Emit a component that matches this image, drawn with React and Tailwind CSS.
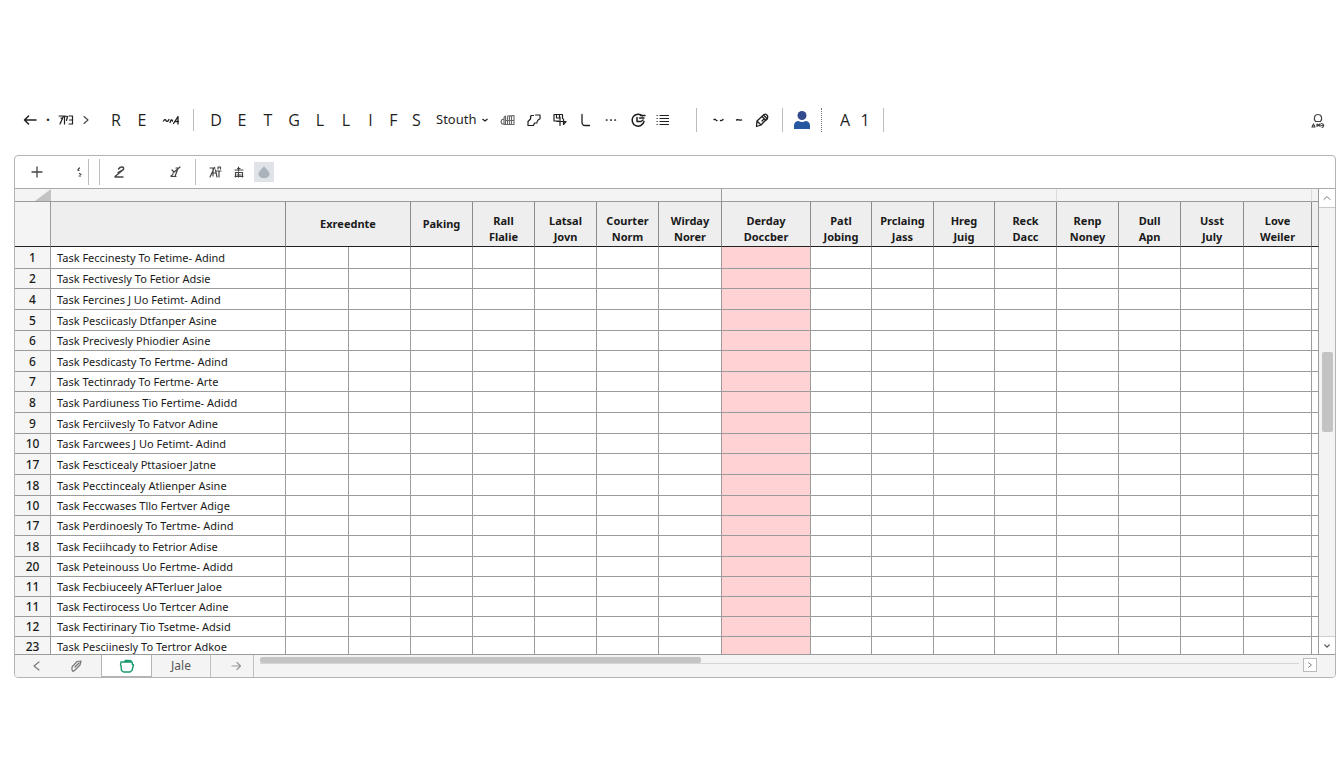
const columnWidths = [36, 235, 63, 62, 62, 62, 62, 62, 63, 89, 61, 62, 61, 62, 62, 62, 63, 68, 7];

const headings = [
  ['Exreednte'],
  ['Paking'],
  ['Rall', 'Flalie'],
  ['Latsal', 'Jovn'],
  ['Courter', 'Norm'],
  ['Wirday', 'Norer'],
  ['Derday', 'Doccber'],
  ['Patl', 'Jobing'],
  ['Prclaing', 'Jass'],
  ['Hreg', 'Juig'],
  ['Reck', 'Dacc'],
  ['Renp', 'Noney'],
  ['Dull', 'Apn'],
  ['Usst', 'July'],
  ['Love', 'Weiler'],
];

const tasks = [
  [1, 'Task Feccinesty To Fetime- Adind'],
  [2, 'Task Fectivesly To Fetior Adsie'],
  [4, 'Task Fercines J Uo Fetimt- Adind'],
  [5, 'Task Pesciicasly Dtfanper Asine'],
  [6, 'Task Precivesly Phiodier Asine'],
  [6, 'Task Pesdicasty To Fertme- Adind'],
  [7, 'Task Tectinrady To Fertme- Arte'],
  [8, 'Task Pardiuness Tio Fertime- Adidd'],
  [9, 'Task Ferciivesly To Fatvor Adine'],
  [10, 'Task Farcwees J Uo Fetimt- Adind'],
  [17, 'Task Fescticealy Pttasioer Jatne'],
  [18, 'Task Pecctincealy Atlienper Asine'],
  [10, 'Task Feccwases Tllo Fertver Adige'],
  [17, 'Task Perdinoesly To Tertme- Adind'],
  [18, 'Task Feciihcady to Fetrior Adise'],
  [20, 'Task Peteinouss Uo Fertme- Adidd'],
  [11, 'Task Fecbiuceely AFTerluer Jaloe'],
  [11, 'Task Fectirocess Uo Tertcer Adine'],
  [12, 'Task Fectirinary Tio Tsetme- Adsid'],
  [23, 'Task Pesciinesly To Tertror Adkoe'],
];

const rowHeights = ['h-[22px]', 'h-5', 'h-[21px]', 'h-[21px]', 'h-5', 'h-[21px]', 'h-5', 'h-[21px]', 'h-[21px]', 'h-5', 'h-[21px]', 'h-[21px]', 'h-5', 'h-5', 'h-[21px]', 'h-5', 'h-5', 'h-5', 'h-5', 'h-5'];

function Icon({ label, className, box = '0 0 16 16', size = 'size-4', children, width = 1.2 }) {
  return (
    <button type="button" aria-label={label} className={`flex shrink-0 items-center justify-center ${className}`}>
      <svg viewBox={box} className={size} fill="none" stroke="currentColor" strokeWidth={width} strokeLinecap="round" strokeLinejoin="round">
        {children}
      </svg>
    </button>
  );
}

function Letter({ children, className = 'w-[26px]' }) {
  return <button type="button" className={`shrink-0 text-center font-['Open_Sans','Noto_Sans',sans-serif] text-base ${className}`}>{children}</button>;
}

function Divider({ className = '' }) {
  return <span className={`w-px shrink-0 bg-[#bdbdbd] ${className}`} />;
}

function CommandBar() {
  return (
    <header className="flex h-6 items-center pl-5 pr-4 text-[#1f1f1f]">
      <Icon label="Back" className="w-5" width={1.5}><path d="M14 8H2.5M6.5 4 2.5 8l4 4" /></Icon>
      <span className="w-4 text-center text-sm font-bold">·</span>
      <Icon label="View" className="w-5" box="0 0 20 16" size="h-4 w-5">
        <path d="M3 4h4.500L4 12M5 6l1.500 1M8.500 4v8M8.500 4l3 .5-1 4M13 4h3.500v8H13M13.500 8h3" />
      </Icon>
      <Icon label="Next" className="w-5 text-[#444]" width={1.1}><path d="m6 4.500 4 3.500-4 3.500" /></Icon>
      <span className="w-[7px] shrink-0" />
      <Letter>R</Letter>
      <Letter>E</Letter>
      <Icon label="Signature" className="w-8" box="0 0 18 16" size="h-4 w-[18px]" width={1.3}>
        <path d="M1.500 9c1-1.500 2-2 2.500-.5S6 9.500 7 7.500M8 10.500c1-3 2-3.500 2.500-1.500M11.500 11.500 16 4.500V12M13 9.500h3.500" />
      </Icon>
      <Divider className="mx-1.5 h-5.5" />
      <span className="w-[3px] shrink-0" />
      <Letter>D</Letter>
      <Letter>E</Letter>
      <Letter>T</Letter>
      <Letter>G</Letter>
      <Letter>L</Letter>
      <Letter>L</Letter>
      <Letter className="w-[23px]">I</Letter>
      <Letter className="w-[23px]">F</Letter>
      <Letter className="w-[23px]">S</Letter>
      <button type="button" className="ml-2 flex w-[53px] shrink-0 items-center justify-between text-[13px]">
        Stouth
        <svg viewBox="0 0 8 8" className="size-2" fill="none" stroke="currentColor" strokeWidth="1.300"><path d="m1.500 3 2.500 2 2.500-2" /></svg>
      </button>
      <Icon label="Chart" className="ml-1.5 w-[26px] text-[#666]" width={1.1}>
        <path d="M4 7.500H2L1 9.500 2 12h2M4 12.500V5.500L5.500 4v8.500M7.500 12.500V5M9.500 12.500V4M11.500 12.500V4M14 12.500V3.500M7.500 4 14 3.500M4 12.500h10M5.500 8.500H14" />
      </Icon>
      <Icon label="Shape" className="w-[26px]">
        <path d="M5 3.500h2.500M9.500 3H14v4l-1.500.5L11 10M5 3.500 4.500 7 2 9.500v4h5.500L8.500 11H11M4.500 4.500V7" />
      </Icon>
      <Icon label="Insert" className="w-[26px]">
        <path d="M2 2.500h8.500v4M2 2.500v6.500h4.500M4.500 2.500V6h3V2.500M8 5v8.500M5 9.500h9M11.500 7v5.500l2.500-3" />
      </Icon>
      <Icon label="Corner" className="w-[26px]" width={1.300}><path d="M4 2.500v7.500c0 2.500 1 3.500 3 3.500h4.500" /></Icon>
      <Icon label="More" className="w-6" width={1.7}><path d="M3.500 8h.4M7.800 8h.4M12 8h.4" /></Icon>
      <Icon label="History" className="w-[29px]" width={1.500}>
        <path d="M12.500 4A6 6 0 1 0 14 9.500M10.500 3.500H15M14 6H9.500M7 5.500v4h4l2-1.500" />
      </Icon>
      <Icon label="List" className="w-[22px]" width={1.200}>
        <path d="M2 3.500h.2M2 6.500h.2M2 9.500h.2M2 12.500h.2M5 3.500h8.500M5 6.500h8.500M5 9.500h8.500M5 12.500h8.500" />
      </Icon>
      <Divider className="ml-[22px] mr-3 h-6" />
      <Icon label="Undo" className="w-5" width={1.400}><path d="M3 7.500h1.500M5.500 8.500h.5M9.500 8.500c1 .5 1.500 0 2.500-1" /></Icon>
      <Icon label="Minus" className="w-5" width={1.400}><path d="M5.500 8c1.500-.7 3 .4 5 0" /></Icon>
      <Icon label="Marker" className="w-[26px]" width={1.300}>
        <path d="m3 9 7-6.500c2-1 4.500 1 3.500 3.500L7 13l-4.500 1.500L3 9Zm0 0 4 4M8 4.500 12 8.500M10 7l-2 2M9.500 3l4 4" />
      </Icon>
      <Divider className="ml-[7px] mr-1.5 h-6" />
      <button type="button" aria-label="Account" className="flex w-[26px] shrink-0 justify-center">
        <svg viewBox="0 0 18 20" className="h-5 w-[18px]" fill="#2558a0">
          <circle cx="9" cy="5.500" r="4.500" fill="#334a8c" />
          <path d="M1 19v-3.500c0-3 2-4.500 4.500-4.500 2 1.300 5 1.300 7 0 2.500 0 4.500 1.500 4.500 4.500V19Z" />
        </svg>
      </button>
      <span className="ml-1.5 h-6 shrink-0 border-l border-dotted border-[#777]" />
      <Letter className="ml-[13px] w-5">A</Letter>
      <Letter className="w-5">1</Letter>
      <Divider className="ml-2 h-6" />
      <span className="flex-1" />
      <Icon label="Profile" className="w-5 pt-0.5 text-[#444]" width={1.200}>
        <path d="M5.500 8.500C3.500 6 4 1.500 8 1.500s4.500 4.500 2.500 7M5.500 8.500h5M2 14l1.500-3L5 14H2M7 13.500V11l1.500 1.500L10 11v2.500M11.500 10.500c3 .5 2.500 3.500.5 4M11.500 12.500h1" />
      </Icon>
    </header>
  );
}

function FormatBar() {
  return (
    <div className="flex h-[33px] items-center border-b border-[#a9a9a9] pb-px pl-2.5 text-[#444]">
      <Icon label="Add" className="w-6" width={1.300}><path d="M8 3v10M3 8h10" /></Icon>
      <span className="w-[18px] shrink-0" />
      <Icon label="Options" className="w-6" width={1.200}><path d="M7 5.500 8.500 4M7 6.500h1M8.500 9.500l1.500 1M8 12h1.500" /></Icon>
      <Divider className="-ml-[3px] h-[26px]" />
      <Divider className="ml-2.5 h-[26px]" />
      <Icon label="Draw" className="ml-2 w-6" width={1.400}>
        <path d="M6.500 5C8.500 2 12.500 2.500 11.500 5.500L3 12.500M6 8.500l4.500-2.500M3 13h8" />
      </Icon>
      <span className="w-[31px] shrink-0" />
      <Icon label="Clear" className="w-6"><path d="m5 6 2 2M13 3 6 9M9 4h2M4 12.500h5M10.500 5.500 8 12.500M6 10.500 4 12" /></Icon>
      <Divider className="ml-2 h-[26px]" />
      <Icon label="Text style" className="ml-[7px] w-6">
        <path d="M3 4h5M7.500 3.500 3 13M6 5v7M8.500 6l1.500 7M10 7h4M11 5V3h2.500v2M12 7v6M5 9h4" />
      </Icon>
      <Icon label="Favourite" className="w-6"><path d="M7.500 3v4M4 6h8M5 8.500h6M4.500 13V8.500M11.500 13V8.500M6.500 4.500h2.500M6 11h4M7.500 8.500V13M4 12.500h8" /></Icon>
      <button type="button" aria-label="Fill colour" className="ml-[3px] flex size-5 shrink-0 items-center justify-center bg-[#dfe3e7]">
        <svg viewBox="0 0 14 14" className="size-3.5" fill="#aab2ba"><path d="M7 1C8 3.500 12.500 6 12.500 9c0 2.500-2.500 4-5.500 4S1.500 11.500 1.500 9C1.500 6 6 3.500 7 1Z" /></svg>
      </button>
    </div>
  );
}

function Sheet() {
  const line = 'border-b border-r border-[#9b9b9b]';
  return (
    <div className="h-[465px] min-w-0 flex-1 overflow-hidden">
      <table className="w-full min-w-[1304px] table-fixed border-separate border-spacing-0 text-[11px] text-[#1a1a1a]">
        <colgroup>
          {columnWidths.map((w, i) => <col key={i} style={{ width: w }} />)}
        </colgroup>
        <thead>
          <tr className="h-[13px] bg-[#f4f4f4]">
            <td className="border-b border-[#9b9b9b] p-0">
              <svg viewBox="0 0 16 12" className="ml-auto h-3 w-4" fill="#c3c3c3"><path d="M16 0v12H0Z" /></svg>
            </td>
            <td colSpan={8} className={`${line} p-0`} />
            <td colSpan={5} className="border-b border-r border-b-[#9b9b9b] border-r-[#dcdcdc] p-0" />
            <td colSpan={4} className="border-b border-r border-b-[#9b9b9b] border-r-[#dcdcdc] p-0" />
            <td className={`${line} p-0`} />
          </tr>
          <tr className="h-[45px] bg-[#eeeeee]">
            <td className="border-b border-r border-b-[#222] border-r-[#9b9b9b] bg-[#f4f4f4]" />
            <td className="border-b border-r border-b-[#222] border-r-[#8b8b8b]" />
            {headings.map((lines, i) => (
              <th key={i} scope="col" colSpan={i === 0 ? 2 : 1} className={`border-b border-r border-b-[#222] border-r-[#8b8b8b] p-0 text-center leading-4 font-bold ${lines.length > 1 ? 'pt-2.5' : ''}`}>
                {lines.map((t) => <span key={t} className="block">{t}</span>)}
              </th>
            ))}
            <td className="border-b border-r border-b-[#222] border-r-[#9b9b9b] p-0" />
          </tr>
        </thead>
        <tbody>
          {tasks.map(([number, name], r) => (
            <tr key={r} className={rowHeights[r]}>
              <th scope="row" className={`${line} bg-[#f5f5f5] p-0 pt-px text-center text-xs leading-4 font-medium`}>{number}</th>
              <td className={`${line} p-0 pt-px pl-1.5 leading-4 whitespace-nowrap`}>{name}</td>
              {columnWidths.slice(2).map((_, c) => (
                <td key={c} className={`${line} p-0 ${c === 7 ? 'bg-[#ffd3d4]' : ''}`} />
              ))}
            </tr>
          ))}
        </tbody>
      </table>
    </div>
  );
}

function VerticalScroll() {
  return (
    <div className="flex w-4 shrink-0 flex-col items-center bg-[#f3f3f3]">
      <Icon label="Scroll up" className="h-[19px] w-4 border-b border-[#c8c8c8] bg-white text-[#666]" size="size-3"><path d="m4 10 4-4 4 4" /></Icon>
      <span className="grow-[144]" />
      <span className="h-20 w-[11px] rounded-xs bg-[#c3c3c3]" />
      <span className="grow-[204]" />
      <Icon label="Scroll down" className="h-[18px] w-4 border-t border-[#d0d0d0] bg-white text-[#555]" size="size-3" width={1.800}><path d="m5 6.500 3 3 3-3" /></Icon>
    </div>
  );
}

function TabBar() {
  return (
    <footer className="flex h-[22px] items-stretch bg-[#f4f4f4] text-[#777]">
      <Icon label="Previous sheet" className="ml-2.5 w-6"><path d="m10 4-5 4 5 4" /></Icon>
      <Icon label="Rename" className="ml-[15px] w-6"><path d="m4 9 5-5.500 4-.5-1 4L7 12l-2 1.500L4 12V9ZM7 9l4-4" /></Icon>
      <Icon label="Home sheet" className="ml-[13px] w-[51px] border-x border-b border-[#b5b5b5] bg-white text-[#149a6a]" width={1.400}>
        <path d="M2 4h11l.5 2.500 1 .5-1.500 5.500-2 1.500H4.500l-2-1.500L2 7.500 1.500 7ZM5.500 4l1-1.500h3L11 4M11 2.500l1 .5" />
      </Icon>
      <button type="button" className="w-[59px] border-r border-[#c0c0c0] text-xs text-[#555]">Jale</button>
      <Icon label="Next sheet" className="ml-1 w-[39px] border-r border-[#c0c0c0] pl-1 text-[#999]" width={1.200}><path d="M4 8h8M9 4.500 12.500 8 9 11.500" /></Icon>
      <div className="ml-1.5 mt-[3px] flex h-1.5 flex-1 items-end border-b border-[#d5d5d5]">
        <span className="h-1.5 grow-[441] rounded-xs bg-[#c4c4c4]" />
        <span className="grow-[598]" />
      </div>
      <Icon label="Scroll right" className="ml-1 mr-[18px] mt-[3px] size-3.5 border border-[#bbb] bg-white" size="size-3"><path d="m6 5 4 3-4 3" /></Icon>
    </footer>
  );
}

export default function App() {
  return (
    <main className="min-h-screen bg-white pt-[108px] font-['Noto_Sans','Open_Sans',sans-serif]">
      <CommandBar />
      <section className="ml-3.5 mr-2 mt-[23px] overflow-hidden rounded-sm border border-[#b3b3b3]">
        <FormatBar />
        <div className="flex border-b border-[#9b9b9b]">
          <Sheet />
          <VerticalScroll />
        </div>
        <TabBar />
      </section>
    </main>
  );
}
